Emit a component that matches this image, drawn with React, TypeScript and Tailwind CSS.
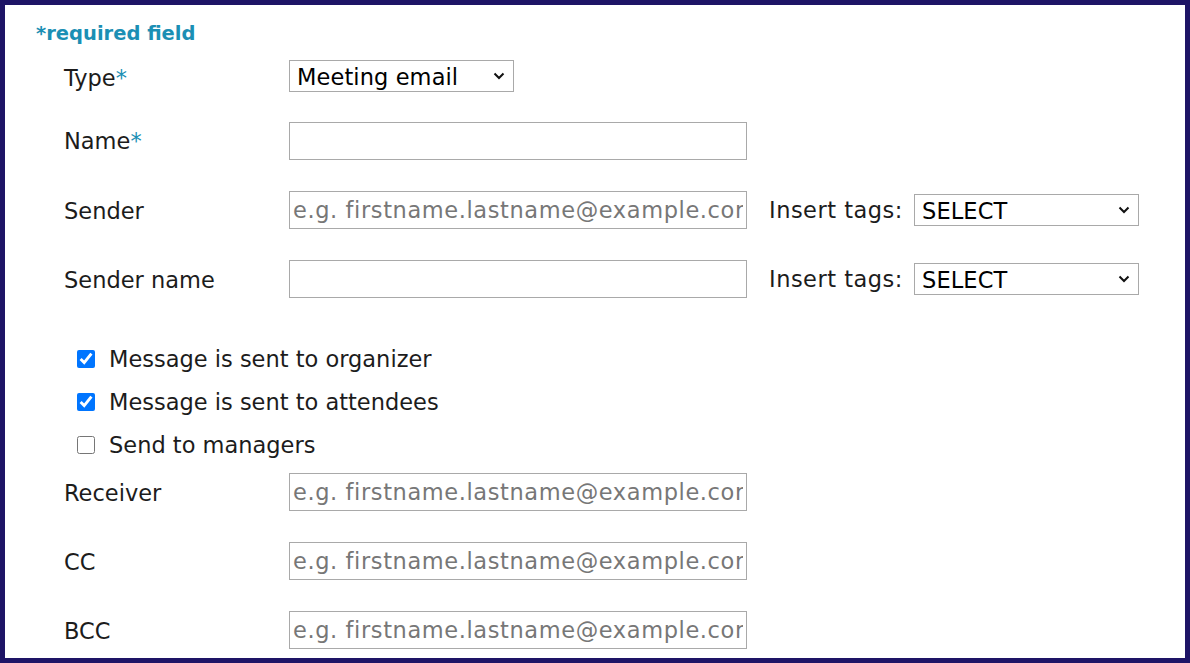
import React from 'react';

const font = { fontFamily: '"DejaVu Sans", Verdana, sans-serif' };

function Chevron() {
  return (
    <svg className="pointer-events-none absolute right-[9px] top-1/2 -translate-y-1/2" width="12" height="8" viewBox="0 0 12 8">
      <path d="M1.5 1.5 L6 6 L10.5 1.5" stroke="#111" strokeWidth="2" fill="none" />
    </svg>
  );
}

function Select({ value }: { value: string }) {
  return (
    <div className="relative h-[32px] w-[225px]">
      <select
        defaultValue={value}
        className="h-full w-full appearance-none border border-[#a9a9a9] bg-white pl-[7px] text-[22.5px] tracking-[0.1px] text-black outline-none"
        style={font}
      >
        <option>{value}</option>
      </select>
      <Chevron />
    </div>
  );
}

function TextInput({ placeholder }: { placeholder?: string }) {
  return (
    <input
      placeholder={placeholder}
      className="h-[38px] w-[458px] border border-[#a9a9a9] bg-white px-[3px] text-[22.5px] tracking-[0.6px] text-black placeholder:text-[#777] outline-none"
      style={font}
    />
  );
}

function Label({ children, req, top = 'pt-[3px]' }: { children: React.ReactNode; req?: boolean; top?: string }) {
  return (
    <div className={`w-[225px] shrink-0 text-[22.5px] text-[#1c1c1c] ${top}`}>
      {children}
      {req && <span className="text-[#1b8fb4]">*</span>}
    </div>
  );
}

function Tags() {
  return <span className="ml-[22px] w-[145px] shrink-0 pt-[2px] text-[22.5px] tracking-[0.5px] text-[#1c1c1c]">Insert tags:</span>;
}

function Check({ label, checked }: { label: string; checked?: boolean }) {
  return (
    <label className="flex h-[43px] items-center">
      <input type="checkbox" defaultChecked={checked} className="ml-[13px] h-[18px] w-[18px] accent-[#0075ff]" />
      <span className="ml-[14px] pt-[3px] text-[22.5px] text-[#1c1c1c]">{label}</span>
    </label>
  );
}

export default function App() {
  const email = 'e.g. firstname.lastname@example.com';
  return (
    <div className="h-[663px] w-[1190px] overflow-hidden border-[5px] border-[#1e1466] bg-white" style={font}>
      <div className="ml-[31px] mt-[17px] h-[24px] text-[19.5px] font-bold leading-[24px] text-[#1b8fb4]">*required field</div>

      <div className="ml-[59px] flex flex-col">
        <div className="mt-[14px] flex h-[32px] items-center">
          <Label req top="pt-[5px]">Type</Label>
          <Select value="Meeting email" />
        </div>

        <div className="mt-[30px] flex h-[38px] items-center">
          <Label req top="pt-[2px]">Name</Label>
          <TextInput />
        </div>

        <div className="mt-[31px] flex h-[38px] items-center">
          <Label>Sender</Label>
          <TextInput placeholder={email} />
          <Tags />
          <Select value="SELECT" />
        </div>

        <div className="mt-[31px] flex h-[38px] items-center">
          <Label>Sender name</Label>
          <TextInput />
          <Tags />
          <Select value="SELECT" />
        </div>

        <div className="mt-[39px] flex flex-col">
          <Check label="Message is sent to organizer" checked />
          <Check label="Message is sent to attendees" checked />
          <Check label="Send to managers" />
        </div>

        <div className="mt-[7px] flex h-[38px] items-center">
          <Label>Receiver</Label>
          <TextInput placeholder={email} />
        </div>

        <div className="mt-[31px] flex h-[38px] items-center">
          <Label>CC</Label>
          <TextInput placeholder={email} />
        </div>

        <div className="mt-[31px] flex h-[38px] items-center">
          <Label>BCC</Label>
          <TextInput placeholder={email} />
        </div>
      </div>
    </div>
  );
}
